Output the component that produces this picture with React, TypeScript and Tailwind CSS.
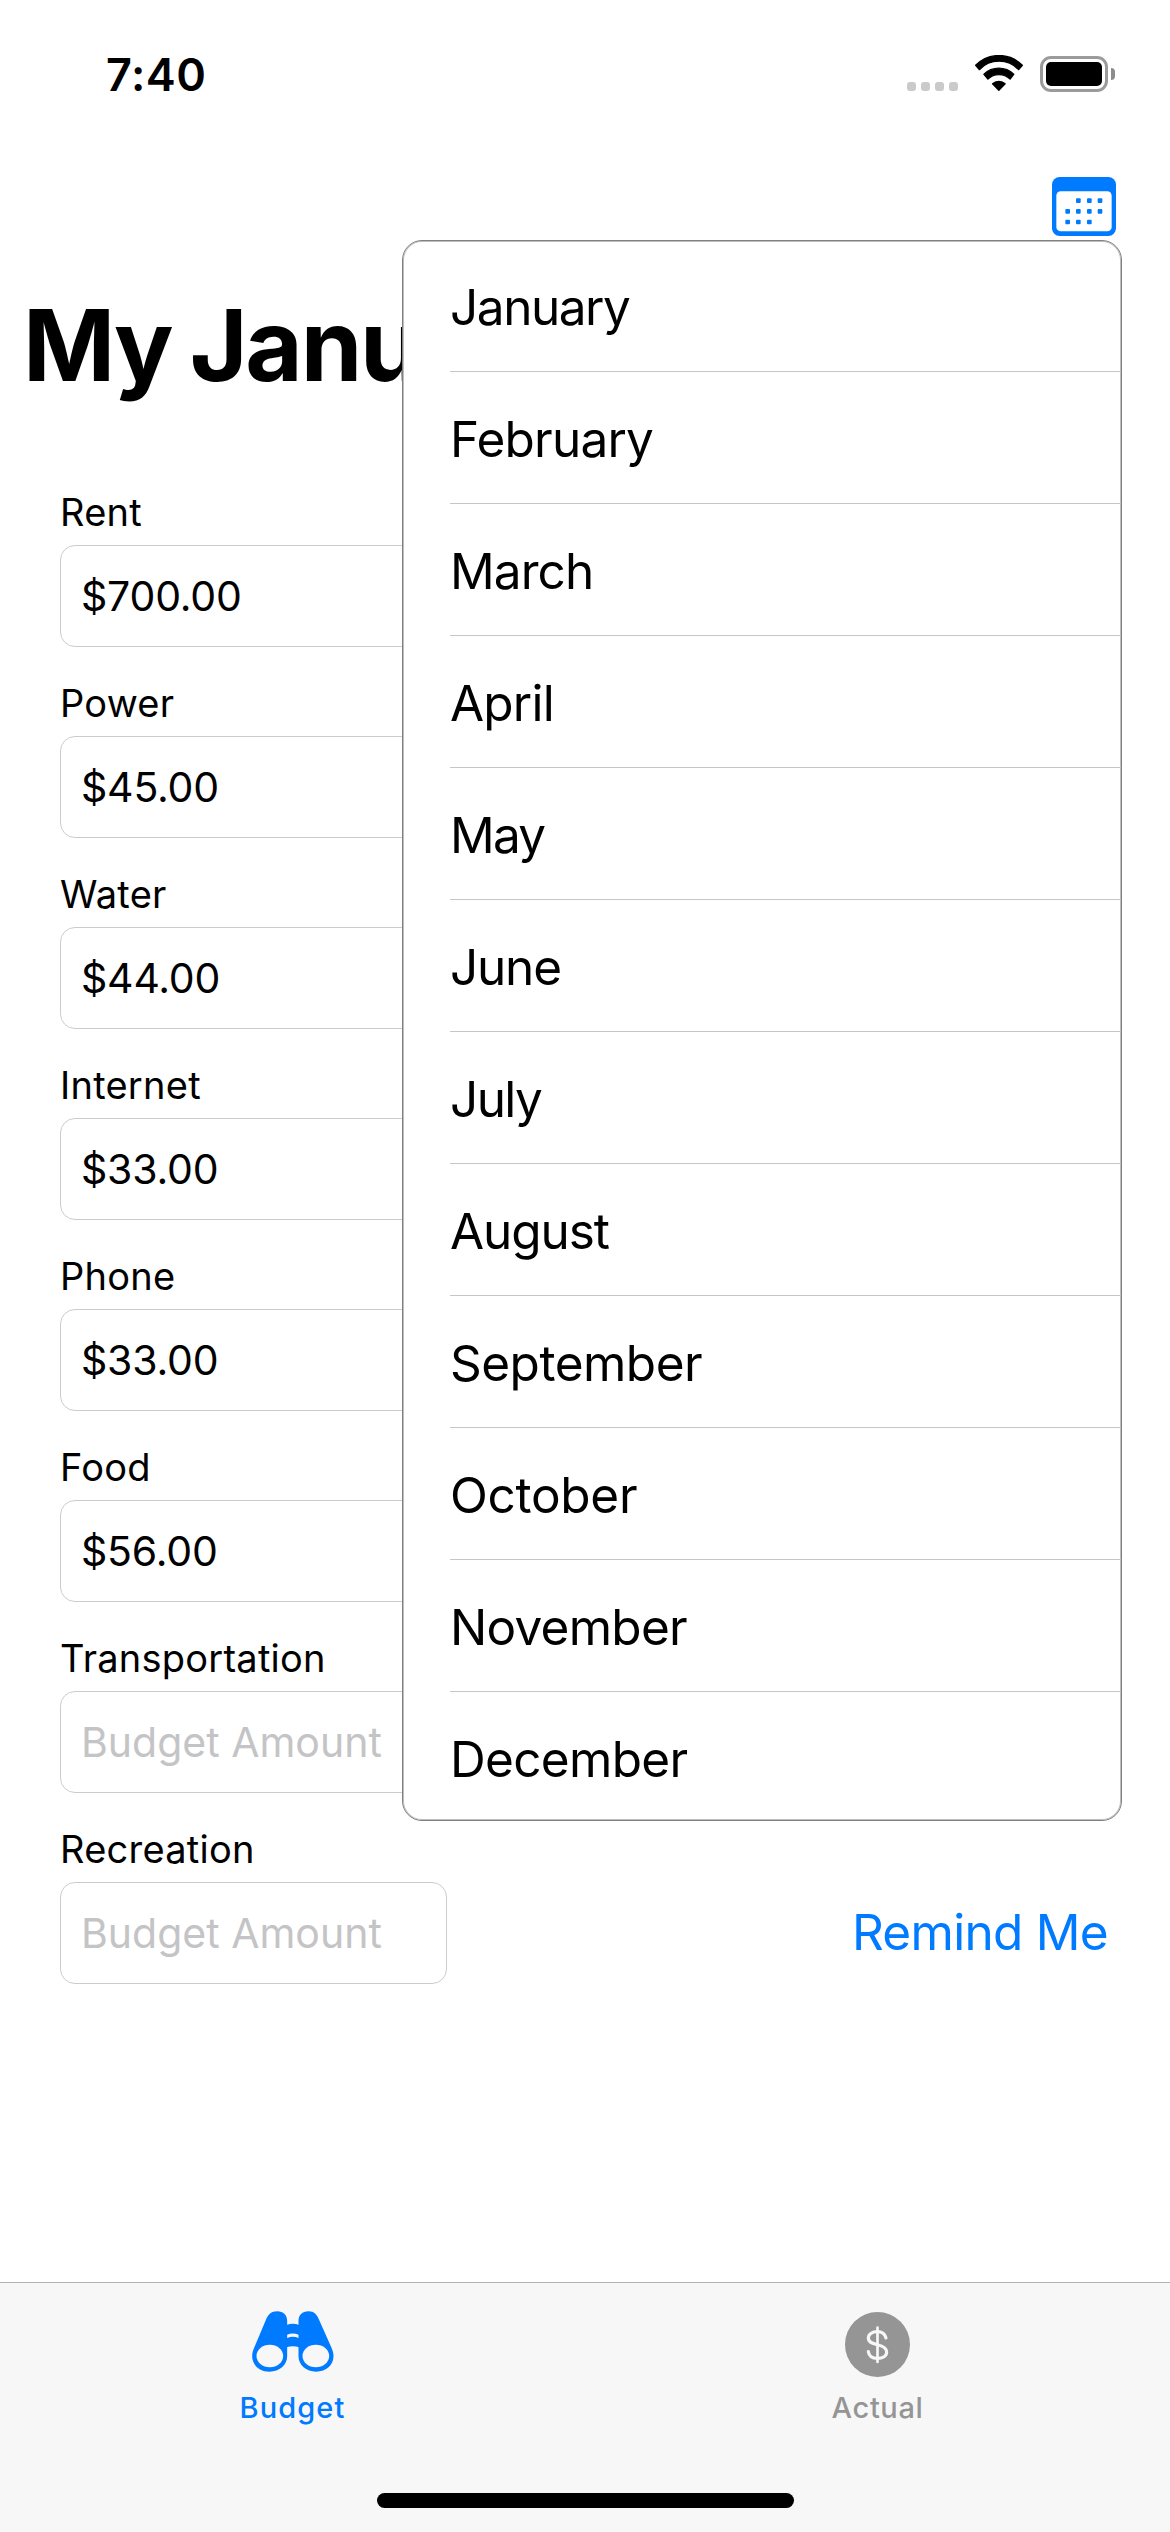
const months = [
  { name: "January", tracking: "tracking-[-1.45px]" },
  { name: "February", tracking: "tracking-[-0.78px]" },
  { name: "March", tracking: "tracking-[-0.9px]" },
  { name: "April", tracking: "tracking-[-0.8px]" },
  { name: "May", tracking: "tracking-[-1.8px]" },
  { name: "June", tracking: "tracking-[-1.2px]" },
  { name: "July", tracking: "tracking-[-1.6px]" },
  { name: "August", tracking: "tracking-[-1.1px]" },
  { name: "September", tracking: "tracking-[-0.5px]" },
  { name: "October", tracking: "tracking-[-0.3px]" },
  { name: "November", tracking: "tracking-[-0.75px]" },
  { name: "December", tracking: "tracking-[-0.67px]" },
];

const fields = [
  { label: "Rent", value: "$700.00" },
  { label: "Power", value: "$45.00" },
  { label: "Water", value: "$44.00" },
  { label: "Internet", value: "$33.00" },
  { label: "Phone", value: "$33.00" },
  { label: "Food", value: "$56.00" },
  { label: "Transportation", value: "" },
  { label: "Recreation", value: "" },
];

function WifiIcon() {
  return (
    <svg className="h-[36px] w-[48px]" viewBox="285 75 145 108" preserveAspectRatio="none">
      <g fill="#000" stroke="#000" strokeWidth="4" strokeLinejoin="round">
        <path d="M287 106A99 99 0 0 1 428 106L417 119A82 82 0 0 0 298 119Z" />
        <path d="M312 133A64 64 0 0 1 402 133L391 147A49 49 0 0 0 324 147Z" />
        <path d="M338 161A29 29 0 0 1 376 161L357 181Z" />
      </g>
    </svg>
  );
}

function StatusBar() {
  return (
    <div className="flex h-[140px] justify-between">
      <span className="ml-[106px] mt-[47px] text-[45px] font-semibold leading-[56px] tracking-[0.5px]">7:40</span>
      <div className="mr-[55px] mt-[55px] flex h-[37px] items-start">
        <div className="mt-[27px] flex gap-[5px]">
          {[0, 1, 2, 3].map((dot) => (
            <span key={dot} className="size-[9px] rounded-[3px] bg-[#cacaca]" />
          ))}
        </div>
        <div className="ml-[17px]">
          <WifiIcon />
        </div>
        <div className="ml-[17px] mt-px h-[36px] w-[68px] rounded-[11px] border-[3px] border-[#9b9b9b] p-[3px]">
          <div className="h-full rounded-[5px] bg-black" />
        </div>
        <span className="ml-[3px] mt-[13px] h-[12px] w-[4px] rounded-r-[4px] bg-[#8c8c8c]" />
      </div>
    </div>
  );
}

function CalendarIcon() {
  const dots = [
    [145, 123], [178, 123], [210, 123],
    [113, 155], [145, 155], [178, 155], [210, 155],
    [113, 187], [145, 187], [178, 187],
  ];
  return (
    <svg className="h-[59px] w-[64px]" viewBox="66 52 192 177">
      <rect x="66" y="52" width="192" height="177" rx="23" fill="#007aff" />
      <rect x="79" y="95" width="166" height="120" rx="13" fill="#fff" />
      {dots.map(([x, y]) => (
        <rect key={`${x}-${y}`} x={x - 7} y={y - 7} width="14" height="14" rx="3" fill="#007aff" />
      ))}
    </svg>
  );
}

function BinocularsIcon() {
  return (
    <svg className="h-[61px] w-[82px]" viewBox="93 154 245 183">
      <g fill="#007aff">
        <path d="M198 290C198 316 175 336 145 336C115 336 93 316 93 290C93 280 95 273 99 264L134 181C141 164 150 155 168 155C187 155 198 167 198 184Z" />
        <path d="M232 290C232 316 255 336 285 336C315 336 337 316 337 290C337 280 335 273 331 264L294 181C287 164 279 155 262 155C243 155 232 167 232 184Z" />
        <path d="M196 196Q215 189 234 196V263Q215 257 196 263Z" />
      </g>
      <g fill="#f7f7f7">
        <ellipse cx="146" cy="289" rx="40" ry="34" />
        <ellipse cx="284" cy="289" rx="40" ry="34" />
        <path d="M198 225Q215 218 232 225V235Q215 227 198 235Z" />
      </g>
    </svg>
  );
}

function DollarIcon() {
  return (
    <svg className="size-[65px]" viewBox="102 155 195 195">
      <circle cx="199.500" cy="252.500" r="97.500" fill="#959595" />
      <g fill="none" stroke="#f7f7f7" strokeWidth="9.500" strokeLinecap="round">
        <path d="M199.500 202V305" strokeWidth="8" />
        <path d="M225 233C222 221 213 214 199 214C183 214 172 222 172 233C172 245 182 249 199 253C217 257 227 262 227 275C227 287 216 294 199 294C184 294 174 286 172 274" />
      </g>
    </svg>
  );
}

function MonthMenu() {
  return (
    <div className="absolute right-[48px] top-full h-[1581px] w-[720px] overflow-hidden rounded-[20px] border border-[#808080] bg-white shadow-[inset_0_0_0_1px_#bdbdbd]">
      <ul className="-mt-px ml-[47px]">
        {months.map(({ name, tracking }) => (
          <li key={name} className="flex h-[132px] items-center border-b border-[#c6c6c8] pt-[3px] text-[49.5px] leading-[60px]">
            <span className={tracking}>{name}</span>
          </li>
        ))}
      </ul>
    </div>
  );
}

function Field({ label, value }: { label: string; value: string }) {
  return (
    <div className="w-[387px]">
      <div className="mb-[10px] text-[38px] leading-[46px] tracking-[0.25px]">{label}</div>
      <div className="flex h-[102px] items-center rounded-[15px] border border-[#cccccc] pl-5 text-[41px] leading-[50px]">
        {value ? (
          <span className="tracking-[-0.2px]">{value}</span>
        ) : (
          <span className="text-[#c4c4c6]">Budget Amount</span>
        )}
      </div>
    </div>
  );
}

export default function App() {
  return (
    <div className="flex h-[2532px] w-[1170px] flex-col overflow-hidden bg-white font-['Inter',sans-serif] text-black">
      <StatusBar />
      <header className="relative z-10 flex h-[100px] items-end justify-end pb-1 pr-[54px]">
        <CalendarIcon />
        <MonthMenu />
      </header>
      <main className="flex flex-1 flex-col">
        <h1 className="ml-[23px] mt-[45px] w-[385px] overflow-hidden whitespace-nowrap text-[99px] font-bold leading-[120px] tracking-[-2.2px] [word-spacing:-3px]">
          My Janu
        </h1>
        <div className="ml-[60px] mr-[62px] mt-[84px] flex items-end justify-between">
          <div className="flex flex-col gap-[33px]">
            {fields.map((field) => (
              <Field key={field.label} {...field} />
            ))}
          </div>
          <button className="mb-[22px] text-[49.5px] leading-[60px] tracking-[-0.7px] text-[#007aff]">Remind Me</button>
        </div>
      </main>
      <nav className="flex h-[250px] flex-col border-t border-[#b2b2b2] bg-[#f7f7f7]">
        <div className="flex h-[210px] text-[29px] font-medium leading-[35px]">
          <div className="flex flex-1 flex-col items-center pt-[28px] text-[#007aff]">
            <div className="h-[79px]">
              <BinocularsIcon />
            </div>
            <span className="tracking-[1.1px]">Budget</span>
          </div>
          <div className="flex flex-1 flex-col items-center pt-[28px] text-[#959595]">
            <div className="h-[79px] pt-px">
              <DollarIcon />
            </div>
            <span className="tracking-[0.6px]">Actual</span>
          </div>
        </div>
        <div className="mx-auto h-[15px] w-[417px] rounded-full bg-black" />
      </nav>
    </div>
  );
}
